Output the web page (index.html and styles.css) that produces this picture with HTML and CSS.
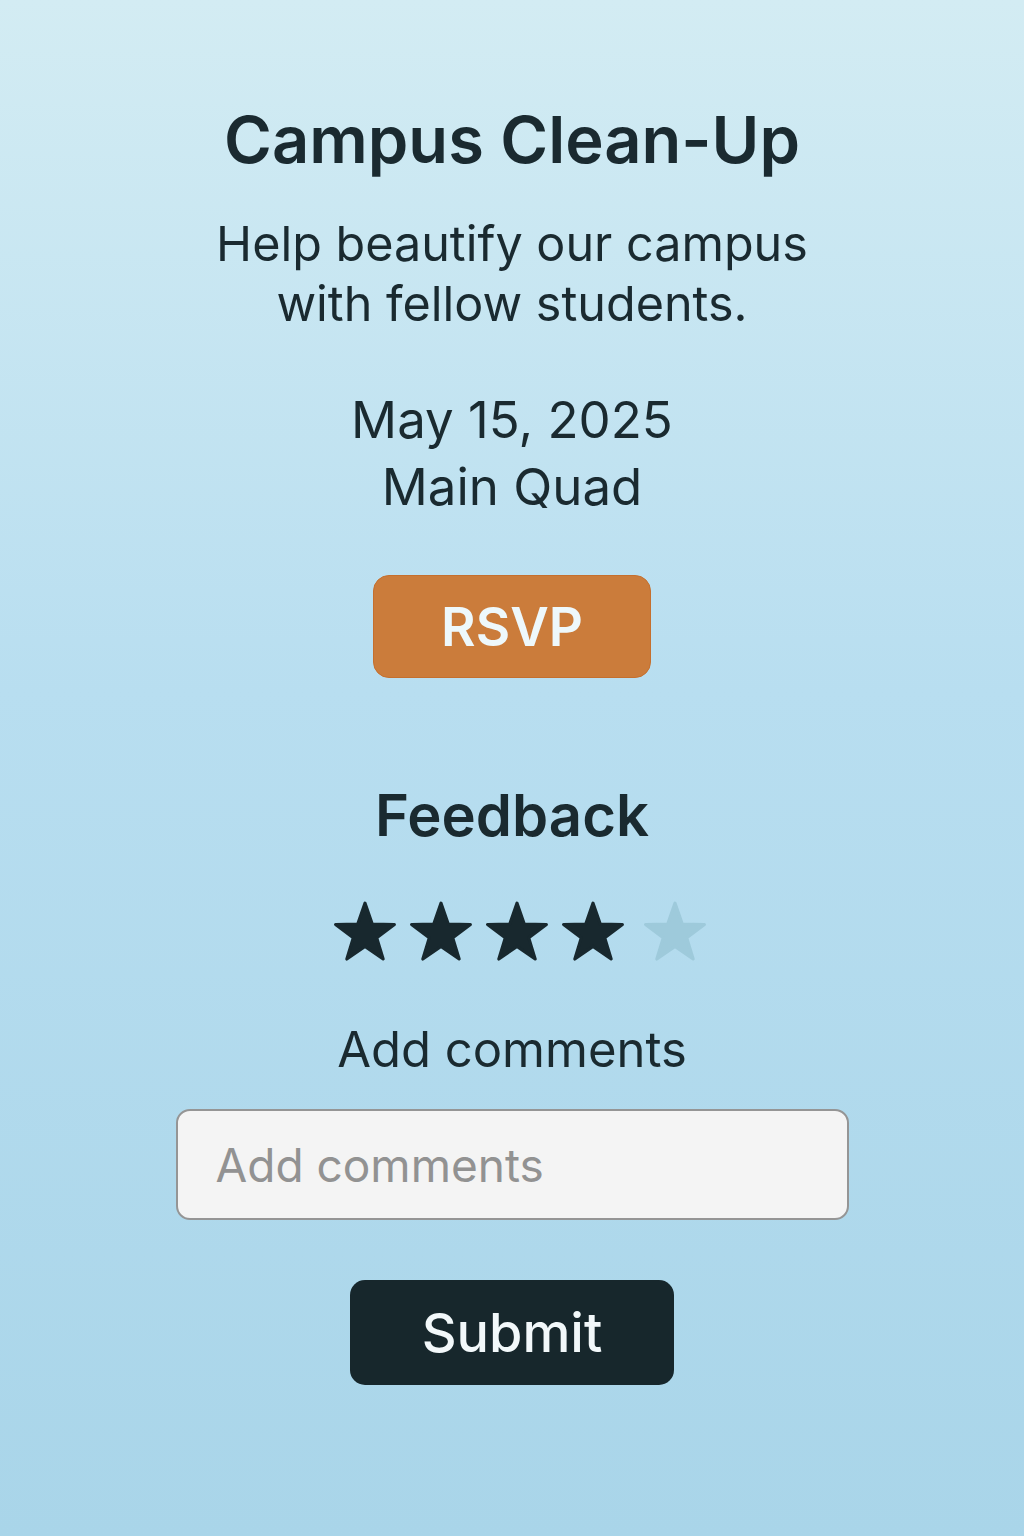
FILE: index.html
```html
<!DOCTYPE html>
<html lang="en">
<head>
<meta charset="utf-8">
<title>Campus Clean-Up</title>
<link rel="stylesheet" href="styles.css">
</head>
<body>
<main class="page">
  <h1 class="title">Campus Clean-Up</h1>
  <p class="subtitle">Help beautify our campus<br>with fellow students.</p>
  <p class="details">May 15, 2025<br>Main Quad</p>
  <button class="rsvp">RSVP</button>

  <h2 class="feedback">Feedback</h2>
  <div class="stars">
    <svg class="star on" viewBox="0 0 64 62"><path d="M32 2L39.05 22.29 60.53 22.73 43.41 35.71 49.63 56.27 32 44 14.37 56.27 20.59 35.71 3.47 22.73 24.95 22.29Z"/></svg>
    <svg class="star on" viewBox="0 0 64 62"><path d="M32 2L39.05 22.29 60.53 22.73 43.41 35.71 49.63 56.27 32 44 14.37 56.27 20.59 35.71 3.47 22.73 24.95 22.29Z"/></svg>
    <svg class="star on" viewBox="0 0 64 62"><path d="M32 2L39.05 22.29 60.53 22.73 43.41 35.71 49.63 56.27 32 44 14.37 56.27 20.59 35.71 3.47 22.73 24.95 22.29Z"/></svg>
    <svg class="star on" viewBox="0 0 64 62"><path d="M32 2L39.05 22.29 60.53 22.73 43.41 35.71 49.63 56.27 32 44 14.37 56.27 20.59 35.71 3.47 22.73 24.95 22.29Z"/></svg>
    <svg class="star off" viewBox="0 0 64 62"><path d="M32 2L39.05 22.29 60.53 22.73 43.41 35.71 49.63 56.27 32 44 14.37 56.27 20.59 35.71 3.47 22.73 24.95 22.29Z"/></svg>
  </div>
  <label class="comment-label" for="comments">Add comments</label>
  <input id="comments" class="comment-input" type="text" placeholder="Add comments">
  <button class="submit">Submit</button>
</main>
</body>
</html>
```

FILE: styles.css
```css
html, body {
  margin: 0;
  padding: 0;
}
body {
  width: 1024px;
  min-height: 1536px;
  background: linear-gradient(180deg, #d3ecf3 0%, #b8def0 45%, #a9d5e9 100%);
  font-family: "Inter", "Noto Sans", sans-serif;
  color: #1a2a30;
}
.page {
  display: flex;
  flex-direction: column;
  align-items: center;
  padding-top: 100px;
}
.title {
  margin: 0;
  font-size: 65px;
  font-weight: 600;
  line-height: 80px;
}
.subtitle {
  margin: 34px 0 0;
  font-size: 48.5px;
  font-weight: 400;
  line-height: 60px;
  text-align: center;
}
.details {
  margin: 52px 0 0;
  font-size: 51px;
  line-height: 67px;
  text-align: center;
}
.rsvp {
  margin-top: 55px;
  width: 278px;
  height: 103px;
  border: 1px solid #c56f2e;
  border-radius: 16px;
  background: #cb7c3b;
  color: #eef8fb;
  font-family: inherit;
  font-size: 53px;
  font-weight: 600;
}
.feedback {
  margin: 101px 0 0;
  font-size: 58px;
  font-weight: 600;
  line-height: 72px;
}
.stars {
  display: flex;
  gap: 10px;
  margin-top: 50px;
  padding-left: 16px;
}
.star {
  width: 66px;
  height: 64px;
  stroke-width: 3;
  stroke-linejoin: round;
}
.star.off {
  margin-left: 6px;
}
.star.on {
  fill: #18282e;
  stroke: #18282e;
}
.star.off {
  fill: #9ecadb;
  stroke: #9ecadb;
}
.comment-label {
  margin-top: 55px;
  font-size: 49px;
  line-height: 60px;
}
.comment-input {
  margin-top: 29px;
  box-sizing: border-box;
  width: 673px;
  height: 111px;
  border: 2px solid #959595;
  border-radius: 14px;
  background: #f4f4f4;
  padding: 0 38px;
  font-family: inherit;
  font-size: 46px;
  color: #333;
  outline: none;
}
.comment-input::placeholder {
  color: #929292;
}
.submit {
  margin-top: 60px;
  width: 324px;
  height: 105px;
  border: none;
  border-radius: 15px;
  background: #17272c;
  color: #f2f8fa;
  font-family: inherit;
  font-size: 54px;
  font-weight: 500;
}
```
